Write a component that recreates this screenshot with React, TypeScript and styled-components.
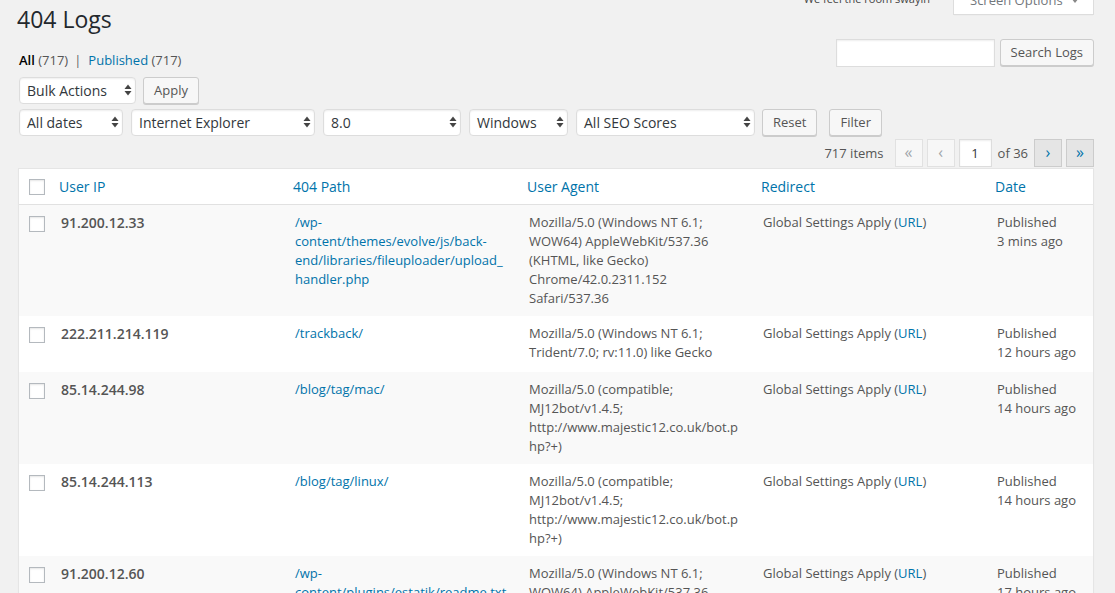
import React from "react";
import styled, { createGlobalStyle } from "styled-components";

const GlobalStyle = createGlobalStyle`
  html, body {
    margin: 0;
    padding: 0;
    background: #f1f1f1;
    overflow: hidden;
  }
  body {
    font-family: "Open Sans", "Liberation Sans", sans-serif;
    font-size: 13px;
    color: #444;
  }
  * { box-sizing: border-box; }
`;

const Wrap = styled.div`
  padding: 0 21px 0 18px;
`;

const TopRow = styled.div`
  display: flex;
  justify-content: space-between;
  align-items: flex-start;
  height: 34px;
`;

const Title = styled.h1`
  margin: 4px 0 0 -1px;
  font-size: 23px;
  font-weight: 400;
  line-height: 30px;
  color: #23282d;
`;

const TopRight = styled.div`
  display: flex;
  align-items: flex-start;
  margin-top: -14px;
`;

const Dolly = styled.p`
  margin: 4px 23px 0 0;
  font-size: 11px;
  line-height: 18px;
  color: #444;
`;

const ScreenOptions = styled.button`
  width: 141px;
  height: 29px;
  display: flex;
  align-items: center;
  gap: 8px;
  padding: 3px 0 3px 16px;
  border: 1px solid #ddd;
  border-top: none;
  background: #fff;
  box-shadow: 0 1px 1px -1px rgba(0, 0, 0, 0.1);
  font-family: inherit;
  font-size: 13px;
  line-height: 22px;
  color: #72777c;
  cursor: pointer;
`;

const SearchRow = styled.div`
  margin-top: 5px;
  display: flex;
  justify-content: space-between;
  align-items: flex-start;
`;

const Subsubsub = styled.ul`
  list-style: none;
  margin: 12px 0 0 1px;
  padding: 0;
  display: flex;
  line-height: 19px;
  font-size: 13px;
  color: #666;
`;

const SubItem = styled.li`
  white-space: pre;
`;

const Separator = styled.span`
  margin: 0 7px 0 6px;
  color: #666;
`;

const Current = styled.span`
  color: #000;
  font-weight: 600;
`;

const Count = styled.span`
  color: #555;
`;

const Link = styled.a`
  color: #0073aa;
  text-decoration: none;
`;

const SearchBox = styled.div`
  display: flex;
  gap: 5px;
  align-items: flex-start;
`;

const TextInput = styled.input<{ $w: number; $center?: boolean }>`
  width: ${(p) => p.$w}px;
  height: 28px;
  margin: 0;
  padding: 0 6px;
  border: 1px solid #ddd;
  background: #fff;
  box-shadow: inset 0 1px 2px rgba(0, 0, 0, 0.07);
  font-family: inherit;
  font-size: 13px;
  color: #32373c;
  text-align: ${(p) => (p.$center ? "center" : "left")};
  outline: none;
`;

const Button = styled.button<{ $ml?: number }>`
  display: inline-flex;
  align-items: center;
  height: 27px;
  margin: 0 0 0 ${(p) => p.$ml || 0}px;
  padding: 0 10px;
  border: 1px solid #ccc;
  border-radius: 3px;
  background: #f7f7f7;
  box-shadow: 0 1px 0 #ccc;
  font-family: inherit;
  font-size: 13px;
  line-height: 1;
  color: #555;
  white-space: nowrap;
  cursor: pointer;
`;

const ControlRow = styled.div<{ $mt: number; $gap: number }>`
  margin-top: ${(p) => p.$mt}px;
  display: flex;
  align-items: flex-start;
  gap: ${(p) => p.$gap}px;
  padding-left: 1px;
`;

const SelectBox = styled.div<{ $w: number }>`
  width: ${(p) => p.$w}px;
  height: 27px;
  display: flex;
  align-items: center;
  justify-content: space-between;
  padding: 0 3px 1px 7px;
  border: 1px solid #ddd;
  border-radius: 4px;
  background: #fff;
  box-shadow: inset 0 1px 2px rgba(0, 0, 0, 0.07);
  font-size: 14px;
  color: #32373c;
  white-space: nowrap;
`;

const PaginationRow = styled.div`
  margin-top: 3px;
  height: 28px;
  display: flex;
  justify-content: flex-end;
  align-items: center;
  gap: 4px;
`;

const ItemsCount = styled.span`
  margin-right: 7px;
  color: #555;
`;

const PageButton = styled.span<{ $disabled?: boolean }>`
  width: 28px;
  height: 28px;
  display: flex;
  align-items: center;
  justify-content: center;
  padding-bottom: 2px;
  border: 1px solid ${(p) => (p.$disabled ? "#e1e1e1" : "#ccc")};
  background: ${(p) => (p.$disabled ? "#f7f7f7" : "#e5e5e5")};
  color: ${(p) => (p.$disabled ? "#a0a5aa" : "#0073aa")};
  font-size: 16px;
  line-height: 1;
`;

const OfText = styled.span`
  margin: 0 2px;
  color: #555;
`;

const Table = styled.div`
  margin-top: 1px;
  border: 1px solid #e5e5e5;
  box-shadow: 0 1px 1px rgba(0, 0, 0, 0.04);
  background: #fff;
`;

const columns = "32px 234px 234px 234px 234px 1fr";

const HeadRow = styled.div`
  display: grid;
  grid-template-columns: ${columns};
  height: 36px;
  align-items: center;
  border-bottom: 1px solid #e1e1e1;
`;

const HeadCell = styled.div`
  padding-left: 8px;
  font-size: 14px;
  color: #0073aa;
  white-space: nowrap;
`;

const CheckCell = styled.div<{ $top?: number }>`
  display: flex;
  padding: ${(p) => p.$top || 0}px 0 0 10px;
`;

const Checkbox = styled.input.attrs({ type: "checkbox" })`
  appearance: none;
  width: 16px;
  height: 16px;
  margin: 0;
  border: 1px solid #b4b9be;
  background: #fff;
  box-shadow: inset 0 1px 2px rgba(0, 0, 0, 0.1);
`;

const BodyRow = styled.div<{ $alt: boolean }>`
  display: grid;
  grid-template-columns: ${columns};
  align-items: start;
  min-height: 56px;
  padding: 8px 0;
  background: ${(p) => (p.$alt ? "#f9f9f9" : "#fff")};
  line-height: 19px;
  color: #555;
`;

const Cell = styled.div`
  padding: 0 10px;
  white-space: nowrap;
`;

const IPCell = styled(Cell)`
  font-size: 14px;
  font-weight: 600;
  color: #555;
`;

const Line = styled.span`
  display: block;
`;

const SelectArrows = () => (
  <svg width="8" height="12" viewBox="0 0 8 12">
    <path d="M0.5 5 L4 0.5 L7.5 5 Z" fill="#444" />
    <path d="M0.5 7 L4 11.5 L7.5 7 Z" fill="#444" />
  </svg>
);

const DownCaret = () => (
  <svg width="8" height="5" viewBox="0 0 8 5">
    <path d="M0 0 L8 0 L4 5 Z" fill="#888" />
  </svg>
);

type Row = {
  ip: string;
  path: string[];
  agent: string[];
  date: string;
};

const chromeUA = [
  "Mozilla/5.0 (Windows NT 6.1;",
  "WOW64) AppleWebKit/537.36",
  "(KHTML, like Gecko)",
  "Chrome/42.0.2311.152",
  "Safari/537.36",
];

const botUA = [
  "Mozilla/5.0 (compatible;",
  "MJ12bot/v1.4.5;",
  "http://www.majestic12.co.uk/bot.p",
  "hp?+)",
];

const rows: Row[] = [
  {
    ip: "91.200.12.33",
    path: [
      "/wp-",
      "content/themes/evolve/js/back-",
      "end/libraries/fileuploader/upload_",
      "handler.php",
    ],
    agent: chromeUA,
    date: "3 mins ago",
  },
  {
    ip: "222.211.214.119",
    path: ["/trackback/"],
    agent: ["Mozilla/5.0 (Windows NT 6.1;", "Trident/7.0; rv:11.0) like Gecko"],
    date: "12 hours ago",
  },
  {
    ip: "85.14.244.98",
    path: ["/blog/tag/mac/"],
    agent: botUA,
    date: "14 hours ago",
  },
  {
    ip: "85.14.244.113",
    path: ["/blog/tag/linux/"],
    agent: botUA,
    date: "14 hours ago",
  },
  {
    ip: "91.200.12.60",
    path: ["/wp-", "content/plugins/estatik/readme.txt"],
    agent: chromeUA,
    date: "17 hours ago",
  },
];

const Lines = ({ lines }: { lines: string[] }) => (
  <>
    {lines.map((l, i) => (
      <Line key={i}>{l}</Line>
    ))}
  </>
);

export default function App() {
  return (
    <>
      <GlobalStyle />
      <Wrap>
        <TopRow>
          <Title>404 Logs</Title>
          <TopRight>
            <Dolly>We feel the room swayin</Dolly>
            <ScreenOptions>
              Screen Options
              <DownCaret />
            </ScreenOptions>
          </TopRight>
        </TopRow>

        <SearchRow>
          <Subsubsub>
            <SubItem>
              <Current>All</Current> <Count>(717)</Count>
              <Separator>|</Separator>
            </SubItem>
            <SubItem>
              <Link href="#">
                Published <Count>(717)</Count>
              </Link>
            </SubItem>
          </Subsubsub>
          <SearchBox>
            <TextInput $w={159} type="search" />
            <Button>Search Logs</Button>
          </SearchBox>
        </SearchRow>

        <ControlRow $mt={7} $gap={7}>
          <SelectBox $w={117}>
            Bulk Actions
            <SelectArrows />
          </SelectBox>
          <Button>Apply</Button>
        </ControlRow>

        <ControlRow $mt={5} $gap={8}>
          <SelectBox $w={104}>
            All dates
            <SelectArrows />
          </SelectBox>
          <SelectBox $w={184}>
            Internet Explorer
            <SelectArrows />
          </SelectBox>
          <SelectBox $w={138}>
            8.0
            <SelectArrows />
          </SelectBox>
          <SelectBox $w={99}>
            Windows
            <SelectArrows />
          </SelectBox>
          <SelectBox $w={179}>
            All SEO Scores
            <SelectArrows />
          </SelectBox>
          <Button $ml={-1}>Reset</Button>
          <Button $ml={4}>Filter</Button>
        </ControlRow>

        <PaginationRow>
          <ItemsCount>717 items</ItemsCount>
          <PageButton $disabled>«</PageButton>
          <PageButton $disabled>‹</PageButton>
          <TextInput $w={33} $center defaultValue="1" />
          <OfText>of 36</OfText>
          <PageButton>›</PageButton>
          <PageButton>»</PageButton>
        </PaginationRow>

        <Table>
          <HeadRow>
            <CheckCell>
              <Checkbox />
            </CheckCell>
            <HeadCell>User IP</HeadCell>
            <HeadCell>404 Path</HeadCell>
            <HeadCell>User Agent</HeadCell>
            <HeadCell>Redirect</HeadCell>
            <HeadCell>Date</HeadCell>
          </HeadRow>
          {rows.map((r, i) => (
            <BodyRow key={i} $alt={i % 2 === 0}>
              <CheckCell $top={3}>
                <Checkbox />
              </CheckCell>
              <IPCell>{r.ip}</IPCell>
              <Cell>
                <Link href="#">
                  <Lines lines={r.path} />
                </Link>
              </Cell>
              <Cell>
                <Lines lines={r.agent} />
              </Cell>
              <Cell>
                Global Settings Apply (<Link href="#">URL</Link>)
              </Cell>
              <Cell>
                <Line>Published</Line>
                <Line>{r.date}</Line>
              </Cell>
            </BodyRow>
          ))}
        </Table>
      </Wrap>
    </>
  );
}
